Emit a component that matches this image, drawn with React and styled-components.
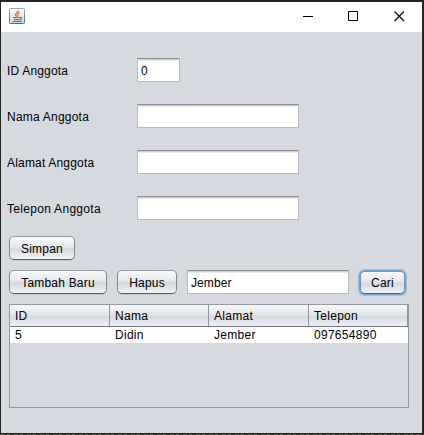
import React from "react";
import styled, { createGlobalStyle, css } from "styled-components";

const GlobalStyle = createGlobalStyle`
  html, body { margin: 0; padding: 0; overflow: hidden; }
  *, *::before, *::after { box-sizing: border-box; }
`;

const Desktop = styled.div`
  width: 424px;
  height: 435px;
  padding: 2px 2px 0 1px;
  background: #252427;
  font-family: "Liberation Sans", Arial, sans-serif;
  font-size: 12px;
  line-height: 14px;
  color: #000;
`;

const Window = styled.main`
  width: 421px;
  height: 431px;
  background: #d6d9df;
`;

const TitleBar = styled.header`
  display: flex;
  align-items: center;
  justify-content: space-between;
  height: 30px;
  padding: 0 17px 0 8px;
  background: #fff;
`;

const AppIcon = styled.svg`
  display: block;
  margin-top: -2px;
`;

const WindowControls = styled.div`
  display: flex;
  gap: 35px;
  margin-top: -1px;
  svg { display: block; }
  svg:last-child { margin-left: 1px; }
`;

const Content = styled.div`
  padding: 26px 13px 0 8px;
`;

const Form = styled.div`
  display: flex;
  flex-direction: column;
  gap: 22px;
`;

const FormRow = styled.div`
  display: flex;
  align-items: center;
  height: 24px;
`;

const Label = styled.label`
  width: 130px;
  margin-left: -2px;
  padding-top: 2px;
  letter-spacing: ${(p) => p.$spacing}px;
`;

const TextField = styled.input`
  width: ${(p) => p.$width}px;
  height: 24px;
  margin: 0;
  padding: 2px 3px 0;
  border: 1px solid #b8b9bb;
  border-top-color: #8d8e8f;
  border-radius: 0;
  outline: none;
  background: linear-gradient(#cbcbcc 0 1px, #ebebeb 1px 2px, #fff 2px);
  font: inherit;
  letter-spacing: 0.1px;
  color: inherit;
`;

const ButtonRow = styled.div`
  display: flex;
  gap: 10px;
  margin-top: ${(p) => p.$top}px;
`;

const Button = styled.button`
  width: ${(p) => p.$width}px;
  height: 24px;
  margin: 0;
  padding: 2px 0 0;
  border: 1px solid #83868c;
  border-top-color: #999ca2;
  border-bottom-color: #5d6066;
  border-radius: 5px;
  background: linear-gradient(#fafafc, #e5e7eb 45%, #d5d8de 55%, #f1f3f7);
  box-shadow: 0 1px 0 #c5c8ce;
  font: inherit;
  letter-spacing: 0.2px;
  color: inherit;
  white-space: nowrap;
  ${(p) =>
    p.$focused &&
    css`
      height: 23px;
      margin: 1px 0 0 1px;
      padding-top: 1px;
      border-color: #7297b8;
      border-bottom-color: #4f6a83;
      box-shadow: 0 0 0 1px #73a4d1, 0 0 0 2px #9dbedd;
    `}
`;

const Table = styled.section`
  width: 400px;
  height: 104px;
  margin-top: 10px;
  border: 1px solid #9297a1;
`;

const TableRow = styled.div`
  display: grid;
  grid-template-columns: 100px 99px 100px 99px;
  height: 16px;
  background: #fff;
`;

const TableHeader = styled(TableRow)`
  height: 22px;
  border-bottom: 1px solid #727783;
  background: linear-gradient(#f7f8fa, #e5e7eb 45%, #d7dae0 55%, #edf0f6);
`;

const Cell = styled.div`
  padding: 1px 0 0 5px;
  white-space: nowrap;
  letter-spacing: 0.28px;
`;

const HeaderCell = styled(Cell)`
  padding-top: 4px;
  border-right: 1px solid #91959e;
`;

const BottomEdge = styled.footer`
  height: 2px;
  background: repeating-linear-gradient(90deg, #555650 0 4px, #292a2a 4px 6px, #686860 6px 9px, #292a2a 9px 13px);
  border-top: 1px solid #202222;
`;

const JavaIcon = () => (
  <AppIcon width="16" height="16" viewBox="0 0 16 16" fill="none">
    <defs>
      <linearGradient id="tile" x1="0" y1="0" x2="0" y2="1">
        <stop stopColor="#f8f9fa" />
        <stop offset="1" stopColor="#cddce5" />
      </linearGradient>
      <linearGradient id="edge" x1="0" y1="0" x2="0" y2="1">
        <stop stopColor="#93a9b8" />
        <stop offset="1" stopColor="#416c8c" />
      </linearGradient>
    </defs>
    <rect x=".5" y=".5" width="15" height="15" rx="1" fill="url(#tile)" stroke="url(#edge)" />
    <path d="M9 2.3C9.6 4.6 5.8 5 6.5 7c.2.8 1 1 1.2 1.8M10.8 4.4C8.5 5.5 8.2 6.3 9 8.4" stroke="#ee7d26" strokeWidth="1.5" />
    <path d="M4 9.5h8q1.4.2 0 1.6l-1.2.5M5 11.5h5.5M3.5 13.4h8.5l1-.4" stroke="#557b98" strokeWidth="1.1" />
  </AppIcon>
);

const members = [["5", "Didin", "Jember", "097654890"]];
const columns = ["ID", "Nama", "Alamat", "Telepon"];
const fields = [
  { label: "ID Anggota", width: 43, value: "0", spacing: 0.18 },
  { label: "Nama Anggota", width: 162, value: "", spacing: 0.22 },
  { label: "Alamat Anggota", width: 162, value: "", spacing: 0.18 },
  { label: "Telepon Anggota", width: 162, value: "", spacing: 0.3 },
];

export default function App() {
  return (
    <Desktop>
      <GlobalStyle />
      <Window>
        <TitleBar>
          <JavaIcon />
          <WindowControls>
            <svg width="10" height="11"><path d="M0 5.5h10" stroke="#000" /></svg>
            <svg width="10" height="11"><path d="M.5.5h9v9h-9z" fill="none" stroke="#000" /></svg>
            <svg width="11" height="11"><path d="M.5.5l9.5 9.5m0-9.5l-9.5 9.5" stroke="#000" strokeWidth="1.1" /></svg>
          </WindowControls>
        </TitleBar>
        <Content>
          <Form>
            {fields.map(({ label, width, value, spacing }) => (
              <FormRow key={label}>
                <Label $spacing={spacing}>{label}</Label>
                <TextField $width={width} defaultValue={value} aria-label={label} />
              </FormRow>
            ))}
          </Form>
          <ButtonRow $top={16}>
            <Button $width={66}>Simpan</Button>
          </ButtonRow>
          <ButtonRow $top={10}>
            <Button $width={98}>Tambah Baru</Button>
            <Button $width={60}>Hapus</Button>
            <TextField $width={162} defaultValue="Jember" aria-label="Cari" />
            <Button $width={45} $focused>Cari</Button>
          </ButtonRow>
          <Table>
            <TableHeader>
              {columns.map((name) => <HeaderCell key={name}>{name}</HeaderCell>)}
            </TableHeader>
            {members.map((row) => (
              <TableRow key={row[0]}>
                {row.map((value) => <Cell key={value}>{value}</Cell>)}
              </TableRow>
            ))}
          </Table>
        </Content>
      </Window>
      <BottomEdge />
    </Desktop>
  );
}
